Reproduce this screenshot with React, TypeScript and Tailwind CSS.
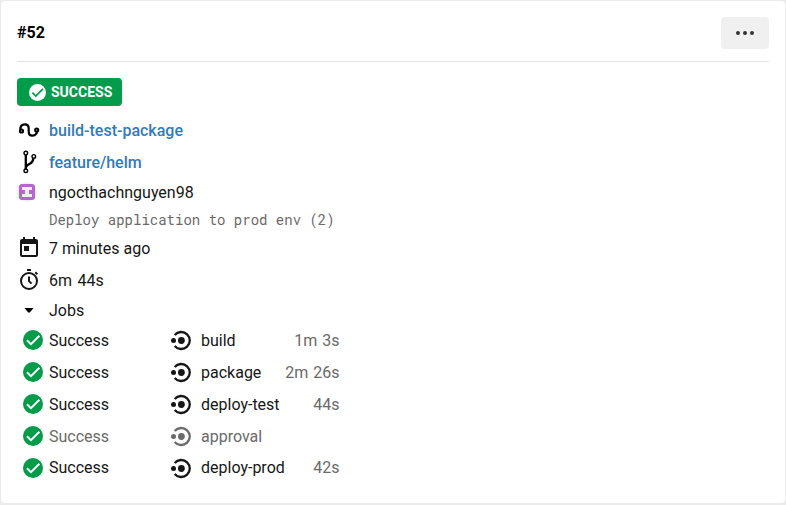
import React from 'react';

const GREEN = '#049b4a';

function CheckIcon({ size, disc, tick }: { size: number; disc: string; tick: string }) {
  return (
    <svg width={size} height={size} viewBox="0 0 20 20" className="block shrink-0">
      <circle cx="10" cy="10" r="10" fill={disc} />
      <path d="M3.900 10.200 8 14.200l8.400-8.400" fill="none" stroke={tick} strokeWidth="2" />
    </svg>
  );
}

function PipelineIcon() {
  return (
    <svg width="24" height="24" viewBox="0 0 24 24" fill="none" stroke="#000" className="block">
      <circle cx="4.500" cy="13" r="1.600" strokeWidth="2" />
      <circle cx="19.700" cy="12" r="1.600" strokeWidth="2" />
      <path d="M3.200 11.800C3.300 8.400 5 6.400 7.800 6.400c2.500 0 3.900 1.600 3.900 4v2.900c0 2.600 1.200 4.400 3.500 4.400 2.600 0 4.700-1.800 4.800-4.600" strokeWidth="2.200" />
    </svg>
  );
}

function BranchIcon() {
  return (
    <svg width="24" height="24" viewBox="0 0 24 24" fill="none" stroke="#000" className="block">
      <circle cx="8.800" cy="3.100" r="1.800" strokeWidth="1.400" />
      <circle cx="8.800" cy="20.800" r="1.800" strokeWidth="1.400" />
      <circle cx="16.800" cy="6.400" r="1.800" strokeWidth="1.400" />
      <path d="M8.800 5v14M16.400 8.300c-.4 3.400-1.400 4.400-3.600 5.500-2.400 1.100-3.700 2.100-4 3.700" strokeWidth="2.300" />
    </svg>
  );
}

function Avatar() {
  return (
    <svg width="20" height="20" viewBox="0 0 20 20" className="block">
      <circle cx="10" cy="10" r="10" fill="#f0f0f0" />
      <rect x="2" y="2" width="16" height="16" rx="3" fill="#b366cc" />
      <path d="M5 5h10v3h-3v4h3v3H5v-3h3V8H5z" fill="#f0f0f0" />
    </svg>
  );
}

function CalendarIcon() {
  return (
    <svg width="24" height="24" viewBox="0 0 24 24" fill="#161616" className="block">
      <path d="M19 3h-1V1h-2v2H8V1H6v2H5c-1.110 0-1.990.9-1.990 2L3 19c0 1.100.89 2 2 2h14c1.100 0 2-.9 2-2V5c0-1.100-.9-2-2-2zm0 16H5V8h14v11zM7 10h5v5H7z" />
    </svg>
  );
}

function TimerIcon() {
  return (
    <svg width="24" height="24" viewBox="0 0 24 24" fill="none" stroke="#161616" strokeWidth="2" className="block">
      <circle cx="12" cy="13" r="8" />
      <path d="M10 2h4M12 8.500v4.600l2.500 2.500M18.300 4.200l2 2" />
    </svg>
  );
}

function JobIcon({ color }: { color: string }) {
  return (
    <svg width="24" height="24" viewBox="0 0 24 24" className="block shrink-0">
      <circle cx="4.500" cy="12.500" r="2.500" fill={color} />
      <circle cx="12.400" cy="12.500" r="3.400" fill={color} />
      <path d="M5.700 7.100a8.500 8.500 0 1 1 0 10.800" fill="none" stroke={color} strokeWidth="2.300" />
    </svg>
  );
}

interface Job {
  name: string;
  time: string;
  muted?: boolean;
}

const jobs: Job[] = [
  { name: 'build', time: '1m 3s' },
  { name: 'package', time: '2m 26s' },
  { name: 'deploy-test', time: '44s' },
  { name: 'approval', time: '', muted: true },
  { name: 'deploy-prod', time: '42s' },
];

function Row({ icon, children, className }: { icon: React.ReactNode; children: React.ReactNode; className: string }) {
  return (
    <div className={`flex items-center ${className}`}>
      <div className="w-8 shrink-0">{icon}</div>
      <span className="pt-[2px]">{children}</span>
    </div>
  );
}

export default function App() {
  return (
    <div className="h-[505px] w-[786px] bg-[#ebebeb] p-px pb-[2px] font-['Roboto',sans-serif] text-base leading-6 text-[#161616]">
      <article className="h-full rounded-[4px] bg-white px-4">
        <header className="flex h-[61px] items-center justify-between border-b border-[#e3e3e3] pt-[3px]">
          <h1 className="font-bold text-black">#52</h1>
          <button aria-label="More actions" className="flex h-8 w-12 items-center justify-center gap-[3px] rounded-[4px] bg-[#f0f0f0]">
            <span className="size-1 rounded-full bg-[#343434]" />
            <span className="size-1 rounded-full bg-[#343434]" />
            <span className="size-1 rounded-full bg-[#343434]" />
          </button>
        </header>

        <div className="mt-4 flex h-7 w-[105px] items-center gap-[5.500px] rounded-[4px] bg-[#049b4a] pl-[11.500px] text-sm font-bold text-white">
          <CheckIcon size={17} disc="#fff" tick={GREEN} />
          SUCCESS
        </div>

        <Row icon={<PipelineIcon />} className="mt-2 h-8 font-medium text-[#337ab7]">
          <a>build-test-package</a>
        </Row>
        <Row icon={<BranchIcon />} className="h-8 font-medium text-[#337ab7]">
          <a>feature/helm</a>
        </Row>
        <Row icon={<Avatar />} className="h-7">
          ngocthachnguyen98
        </Row>
        <p className="h-7 pl-8 font-['Roboto_Mono','Liberation_Mono',monospace] text-sm leading-7 text-[#6a6a6a]">
          Deploy application to prod env (2)
        </p>
        <Row icon={<CalendarIcon />} className="h-7">
          7 minutes ago
        </Row>
        <Row icon={<TimerIcon />} className="mt-0.5 h-8 [word-spacing:1.5px]">
          6m 44s
        </Row>
        <Row
          icon={
            <svg width="24" height="24" viewBox="0 0 24 24" className="block">
              <path d="M7.500 10h9L12.800 14.500h-1.600z" fill="#000" />
            </svg>
          }
          className="h-7"
        >
          Jobs
        </Row>

        <ul>
          {jobs.map((job, index) => {
            const nudge = index === jobs.length - 1 ? 'pt-0' : 'pt-[2px]';
            return (
              <li key={job.name} className={`flex h-8 items-center ${job.muted ? 'text-[#6a6a6a]' : 'text-[#161616]'}`}>
                <div className="flex w-[152px] items-center gap-[6px] pl-[6px]">
                  <CheckIcon size={20} disc={GREEN} tick="#fff" />
                  <span className={nudge}>Success</span>
                </div>
                <div className="flex w-[100px] items-center gap-2">
                  <JobIcon color={job.muted ? '#6a6a6a' : '#161616'} />
                  <span className={`whitespace-nowrap ${nudge}`}>{job.name}</span>
                </div>
                <span className={`w-[70.500px] text-right text-[#6a6a6a] [word-spacing:1px] ${nudge}`}>{job.time}</span>
              </li>
            );
          })}
        </ul>
      </article>
    </div>
  );
}
